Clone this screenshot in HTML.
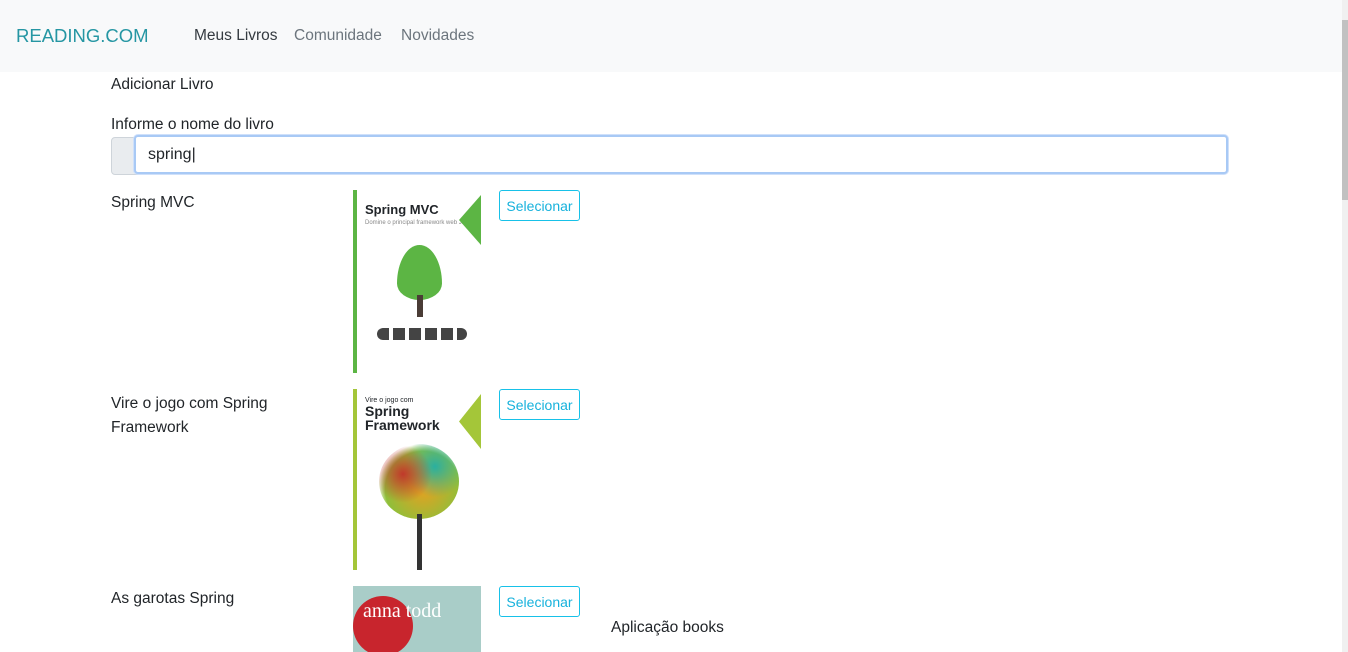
<!DOCTYPE html>
<html><head><meta charset="utf-8"><style>
body{margin:0;width:1348px;height:652px;overflow:hidden;font-family:"Segoe UI","Liberation Sans",sans-serif;font-size:15px;color:#212529;background:#fff;position:relative}
.nav{position:absolute;left:0;top:0;width:1342px;height:72px;background:#f8f9fa}
.brand{position:absolute;left:16px;top:25px;font-size:18.5px;color:#2596a3}
.nl{position:absolute;top:27px;font-size:15.5px;color:#6c757d}
.sb{position:absolute;right:0;top:0;width:6px;height:652px;background:#f0f0f0}
.sb div{position:absolute;left:0;top:20px;width:6px;height:180px;background:#c1c1c1}
.t{position:absolute;font-size:15.5px}
.pre{position:absolute;left:111px;top:137px;width:26px;height:36px;background:#e9ecef;border:1px solid #ced4da;border-radius:4px 0 0 4px}
.inp{position:absolute;left:134px;top:135px;width:1090px;height:35px;border:2px solid #a8c9f5;border-radius:4px;background:#fff;box-shadow:0 0 0 1px #cfe0fa}
.btn{position:absolute;left:499px;width:79px;height:29px;border:1px solid #17c1e8;border-radius:3px;color:#17b2dc;font-size:14px;text-align:center;line-height:30px}
.cov{position:absolute;left:353px;width:128px;background:#fff;overflow:hidden}
</style></head><body>
<div class="nav">
<div class="brand">READING.COM</div>
<div class="nl" style="left:194px;color:#343a40">Meus Livros</div>
<div class="nl" style="left:294px">Comunidade</div>
<div class="nl" style="left:401px">Novidades</div>
</div>
<div class="sb"><div></div></div>
<div class="t" style="left:111px;top:76px">Adicionar Livro</div>
<div class="t" style="left:111px;top:116px">Informe o nome do livro</div>
<div class="pre"></div>
<div class="inp"><span style="position:absolute;left:12px;top:9px;font-size:16px">spring|</span></div>

<div class="t" style="left:111px;top:194px">Spring MVC</div>
<div class="cov" style="top:190px;height:183px;border-left:4px solid #5cb544;width:124px">
<div style="position:absolute;left:8px;top:12px;font-weight:bold;font-size:13px">Spring MVC</div>
<div style="position:absolute;left:8px;top:30px;font-size:6px;color:#888">Domine o principal framework web Java</div>
<div style="position:absolute;right:0;top:5px;width:22px;height:50px;background:#5cb544;clip-path:polygon(100% 0,0 50%,100% 100%)"></div>
<div style="position:absolute;left:40px;top:55px;width:45px;height:55px;background:#5cb544;border-radius:50% 50% 50% 50%/70% 70% 30% 30%"></div>
<div style="position:absolute;left:60px;top:105px;width:6px;height:22px;background:#4a3c36"></div>
<div style="position:absolute;left:20px;top:138px;width:90px;height:12px;background:repeating-linear-gradient(90deg,#444 0 12px,transparent 12px 16px);border-radius:6px"></div>
</div>
<div class="btn" style="top:190px">Selecionar</div>

<div class="t" style="left:111px;top:392px;line-height:24px">Vire o jogo com Spring<br>Framework</div>
<div class="cov" style="top:389px;height:181px;border-left:4px solid #a4c639;width:124px">
<div style="position:absolute;left:8px;top:8px;font-size:7px">Vire o jogo com</div>
<div style="position:absolute;left:8px;top:15px;font-weight:bold;font-size:14px;line-height:14px">Spring<br>Framework</div>
<div style="position:absolute;right:0;top:5px;width:22px;height:55px;background:#a4c639;clip-path:polygon(100% 0,0 50%,100% 100%)"></div>
<div style="position:absolute;left:22px;top:55px;width:80px;height:75px;border-radius:50%;background:radial-gradient(circle at 30% 40%,#c0392b,transparent 40%),radial-gradient(circle at 70% 30%,#2ab0a0,transparent 40%),radial-gradient(circle at 55% 60%,#e6a020,#8fbf3a 60%,transparent 72%)"></div>
<div style="position:absolute;left:60px;top:125px;width:5px;height:56px;background:#333"></div>
</div>
<div class="btn" style="top:389px">Selecionar</div>

<div class="t" style="left:111px;top:590px">As garotas Spring</div>
<div class="cov" style="top:586px;height:66px;background:#a9cdc8">
<div style="position:absolute;left:0;top:10px;width:60px;height:60px;border-radius:50%;background:#c8252d"></div>
<div style="position:absolute;left:10px;top:14px;font-family:'Liberation Serif',serif;color:#fff;font-size:20px">anna todd</div>
</div>
<div class="btn" style="top:586px">Selecionar</div>
<div class="t" style="left:611px;top:619px">Aplicação books</div>
</body></html>
